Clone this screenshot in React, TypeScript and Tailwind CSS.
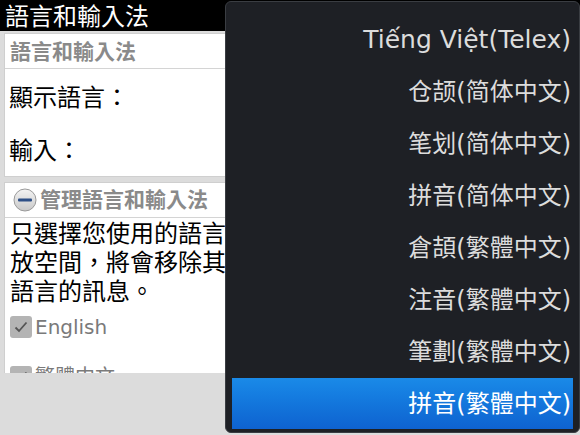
import React from 'react'

const items = [
  'Tiếng Việt(Telex)',
  '仓颉(简体中文)',
  '笔划(简体中文)',
  '拼音(简体中文)',
  '倉頡(繁體中文)',
  '注音(繁體中文)',
  '筆劃(繁體中文)',
  '拼音(繁體中文)',
]

const font = { fontFamily: '"Noto Sans", "Noto Sans CJK TC", sans-serif' }
const menuFont = { fontFamily: '"DejaVu Sans", "Noto Sans CJK SC", "Noto Sans CJK TC", sans-serif' }

const MinusIcon = () => (
  <svg width="24" height="24" viewBox="0 0 24 24" className="shrink-0">
    <defs>
      <linearGradient id="mg" x1="0" y1="0" x2="0" y2="1">
        <stop offset="0" stopColor="#f4f4f4" />
        <stop offset="1" stopColor="#c8c8c8" />
      </linearGradient>
    </defs>
    <circle cx="12" cy="12" r="11" fill="url(#mg)" stroke="#9a9a9a" strokeWidth="1" />
    <rect x="5" y="10.5" width="14" height="3" rx="1" fill="#2d4f86" />
  </svg>
)

const Check = () => (
  <span className="w-[22px] h-[22px] rounded-[3px] bg-[#b4b4b4] flex items-center justify-center shrink-0">
    <svg width="16" height="16" viewBox="0 0 16 16">
      <path d="M2.5 8.5 L6 12 L13.5 3.5" fill="none" stroke="#555" strokeWidth="1.8" />
    </svg>
  </span>
)

export default function App() {
  return (
    <div className="w-[580px] h-[435px] relative overflow-hidden bg-[#dcdcdc]" style={font}>
      <div className="h-[31px] bg-black text-white text-[24px] leading-[31px] pl-[5px]">語言和輸入法</div>

      <div className="h-[342px] overflow-hidden pt-[2px] px-[4px] flex flex-col gap-[5px]">
        <div className="bg-white border border-[#cfcfcf] h-[144px] shrink-0 flex flex-col">
          <div className="h-[35px] border-b border-[#d4d4d4] text-[#8a8a8a] font-bold text-[21px] leading-[35px] pl-[5px]">
            語言和輸入法
          </div>
          <div className="text-[24px] text-black pl-[4px] pt-[8px] leading-[40px]">顯示語言：</div>
          <div className="text-[24px] text-black pl-[4px] pt-[13px] leading-[40px]">輸入：</div>
        </div>

        <div className="bg-white border border-[#cfcfcf] flex-1 shrink-0 flex flex-col">
          <div className="h-[35px] shrink-0 border-b border-[#d4d4d4] flex items-center gap-[3px] pl-[8px]">
            <MinusIcon />
            <span className="text-[#8a8a8a] font-bold text-[21px]">管理語言和輸入法</span>
          </div>
          <div className="text-[24px] text-black leading-[29px] pl-[5px] whitespace-nowrap">
            <div>只選擇您使用的語言，以釋</div>
            <div>放空間，將會移除其他</div>
            <div>語言的訊息。</div>
          </div>
          <div className="flex items-center gap-[3px] pl-[5px] mt-[10px] h-[24px] shrink-0">
            <Check />
            <span className="text-[20px] text-[#7a7a7a]" style={{ fontFamily: '"DejaVu Sans", sans-serif' }}>English</span>
          </div>
          <div className="flex items-center gap-[3px] pl-[5px] mt-[26px] h-[24px] shrink-0">
            <Check />
            <span className="text-[20px] text-[#7a7a7a]">繁體中文</span>
          </div>
        </div>
      </div>

      <div
        className="absolute left-[225px] top-[1px] w-[355px] h-[432px] bg-[#1e2025] rounded-[6px] border border-[#3a3d42] pt-[12px] px-[6px]"
        style={menuFont}
      >
        {items.map((t, i) => (
          <div
            key={t}
            className={
              i === items.length - 1
                ? 'h-[51px] flex items-center justify-end pr-[2px] text-[24px] text-white bg-gradient-to-b from-[#1a8ae8] to-[#0f62d0]'
                : i === 0
                  ? 'h-[52px] flex items-center justify-end pr-[2px] text-[25px] text-[#dcdcdc]'
                  : 'h-[52px] flex items-center justify-end pr-[2px] text-[24px] text-[#dcdcdc]'
            }
          >
            {t}
          </div>
        ))}
      </div>
    </div>
  )
}
